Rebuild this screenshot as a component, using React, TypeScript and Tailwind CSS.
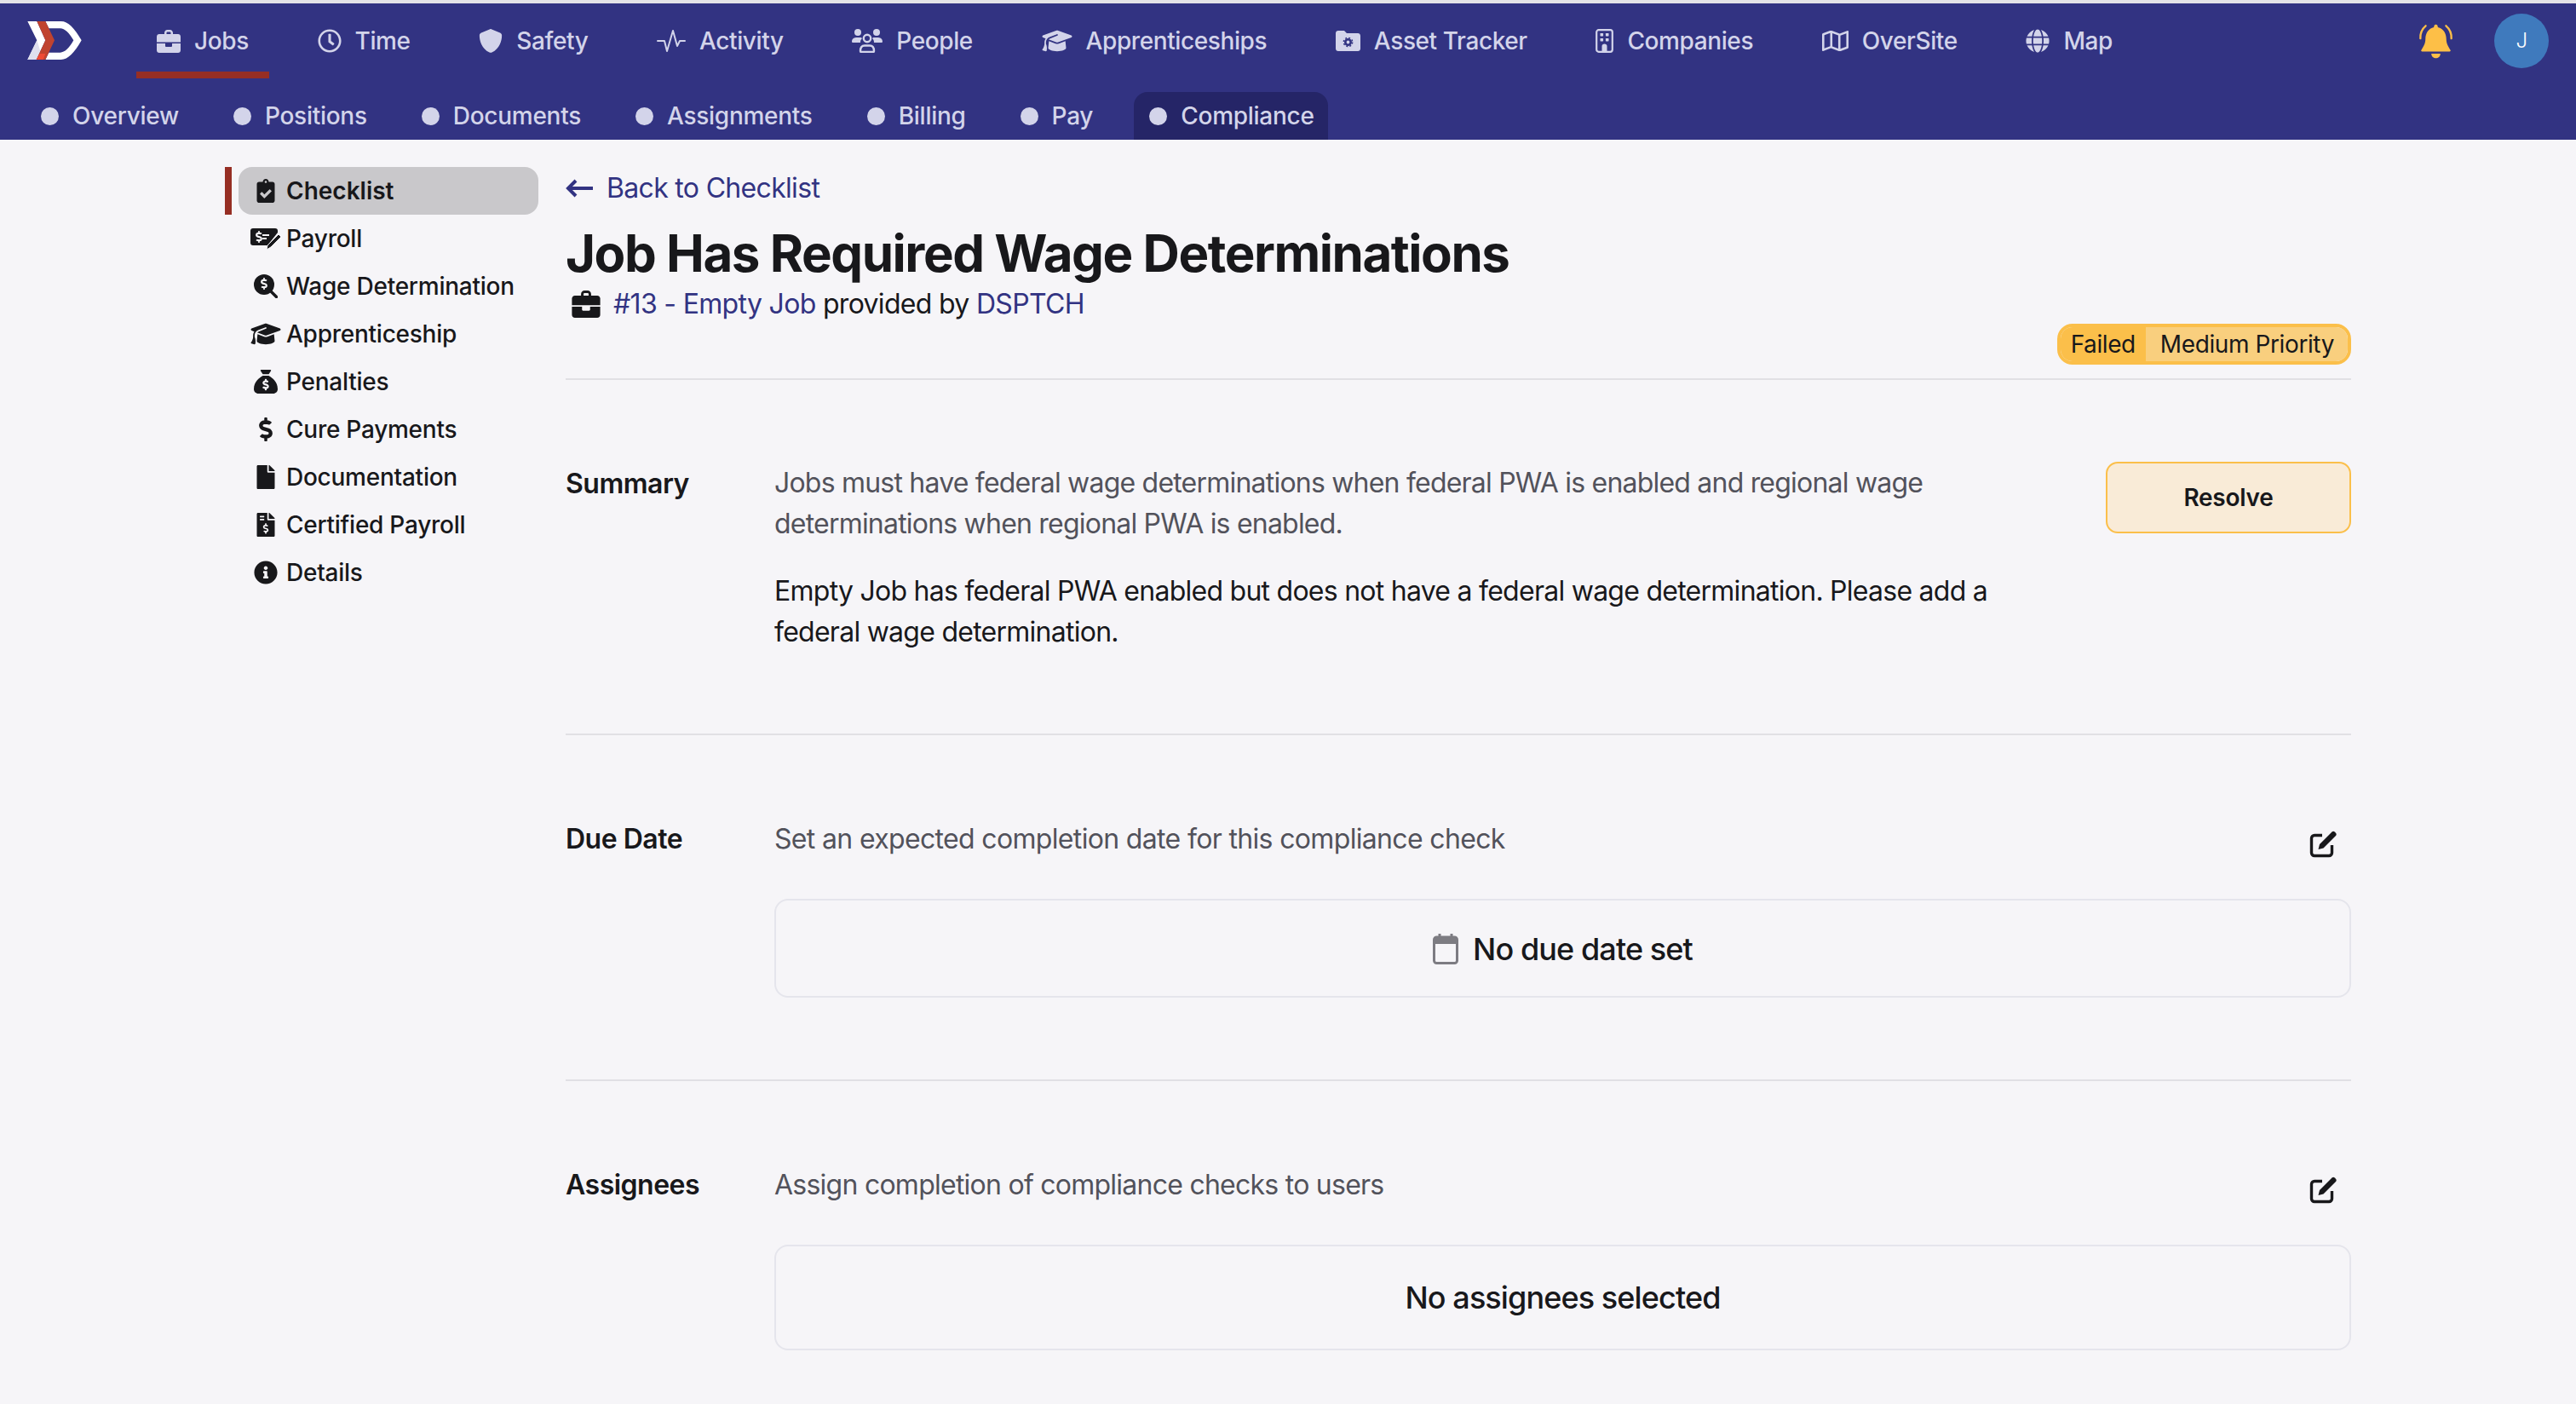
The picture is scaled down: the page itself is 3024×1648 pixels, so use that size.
import type { ReactNode } from "react"
import {
  FaRegClock,
  FaRegMap,
  FaGlobe,
  FaClipboardCheck,
  FaDollarSign,
  FaFile,
  FaFileInvoiceDollar,
  FaInfoCircle,
} from "react-icons/fa"
import { FaShield, FaSackDollar, FaGraduationCap } from "react-icons/fa6"

function Logo() {
  return (
    <svg viewBox="97 76 190 135" className="w-[64px] h-[45px] shrink-0">
      <path d="M160 76H215C240 76 262 100 287 143C262 187 240 211 215 211H160L172 186H212C228 186 244 170 259 143C244 117 228 101 212 101H172Z" fill="#ffffff" />
      <path d="M97 76H130L160 143L128 211H97L130 143Z" fill="#ffffff" />
      <path d="M130 143L97 211H128L142 180Z" fill="#dfdfee" />
      <path d="M130 76H160L192 143L160 211H128L160 143Z" fill="#c0432f" />
      <path d="M140 190L160 190L152 211H128Z" fill="#ef4a35" />
    </svg>
  )
}

function BriefcaseIcon({ className }: { className: string }) {
  return (
    <svg viewBox="0 0 28 27" className={className} fill="currentColor">
      <path d="M9 5V3.5C9 1.6 10.6 0 12.5 0H15.5C17.4 0 19 1.6 19 3.5V5H16.5V3.5C16.5 3 16 2.5 15.5 2.5H12.5C12 2.5 11.5 3 11.5 3.5V5Z" />
      <path d="M3 5H25C26.7 5 28 6.3 28 8V14.5H0V8C0 6.3 1.3 5 3 5Z" />
      <path d="M0 16H10V19C10 19.5 10.5 20 11 20H17C17.5 20 18 19.5 18 19V16H28V24C28 25.7 26.7 27 25 27H3C1.3 27 0 25.7 0 24Z" />
    </svg>
  )
}

function PulseIcon() {
  return (
    <svg viewBox="0 0 34 28" className="w-[34px] h-[28px]" fill="none" stroke="currentColor" strokeWidth="2" strokeLinejoin="round" strokeLinecap="round">
      <path d="M1 14H9L12 26L19 2L24 20L27 14H33" />
    </svg>
  )
}

function PeopleIcon() {
  return (
    <svg viewBox="0 0 36 28" className="w-[36px] h-[28px]" fill="currentColor">
      <circle cx="7" cy="4" r="4" />
      <circle cx="29" cy="4" r="4" />
      <path d="M0 15C0 11 3 10 6 10H10C11 10 11.5 10.5 12 11C10.5 12.5 10 14 10 16H1.5C.5 16 0 15.5 0 15Z" />
      <path d="M36 15C36 11 33 10 30 10H26C25 10 24.5 10.5 24 11C25.5 12.5 26 14 26 16H34.5C35.5 16 36 15.5 36 15Z" />
      <circle cx="18" cy="11" r="4.2" fill="none" stroke="currentColor" strokeWidth="2.4" />
      <path d="M10 26C10 22 12 19.5 15 19.5H21C24 19.5 26 22 26 26C26 26.6 25.6 27 25 27H11C10.4 27 10 26.6 10 26Z" fill="none" stroke="currentColor" strokeWidth="2.4" />
    </svg>
  )
}

function FolderGearIcon() {
  return (
    <svg viewBox="0 0 29 24" className="w-[29px] h-[24px]">
      <path d="M3 0H10L13 3H26C27.7 3 29 4.3 29 6V21C29 22.7 27.7 24 26 24H3C1.3 24 0 22.7 0 21V3C0 1.3 1.3 0 3 0Z" fill="currentColor" />
      <circle cx="14.5" cy="13.5" r="3.2" fill="none" stroke="#323382" strokeWidth="2.6" />
      <circle cx="14.5" cy="13.5" r="5.2" fill="none" stroke="#323382" strokeWidth="1.4" strokeDasharray="2 2.1" />
    </svg>
  )
}

function BuildingIcon() {
  return (
    <svg viewBox="0 0 21 28" className="w-[21px] h-[28px]" fill="currentColor">
      <rect x="1.2" y="1.2" width="18.6" height="25.6" rx="2.5" fill="none" stroke="currentColor" strokeWidth="2.2" />
      <rect x="5.5" y="5" width="3.6" height="3.4" rx=".6" />
      <rect x="11.9" y="5" width="3.6" height="3.4" rx=".6" />
      <rect x="5.5" y="11" width="3.6" height="3.4" rx=".6" />
      <rect x="11.9" y="11" width="3.6" height="3.4" rx=".6" />
      <path d="M7.5 27V20C7.5 18.6 8.8 17.5 10.5 17.5C12.2 17.5 13.5 18.6 13.5 20V27Z" />
    </svg>
  )
}

function BellIcon() {
  return (
    <svg viewBox="58 52 124 124" className="w-[41px] h-[41px]" fill="#fdbf47">
      <path d="M120 54C125 54 127 58 127 64C146 69 157 84 157 106C157 124 165 134 172 146C173 149 171 150 169 150H71C69 150 67 149 68 146C75 134 83 124 83 106C83 84 94 69 113 64C113 58 115 54 120 54Z" />
      <path d="M104 158H136C136 168 128 174 120 174C112 174 104 168 104 158Z" />
      <path d="M84 59C71 70 64 85 65 104" fill="none" stroke="#fdbf47" strokeWidth="7" strokeLinecap="round" />
      <path d="M156 59C169 70 176 85 175 104" fill="none" stroke="#fdbf47" strokeWidth="7" strokeLinecap="round" />
    </svg>
  )
}

function PayrollIcon() {
  return (
    <span className="relative w-[36px] h-[25px] shrink-0">
      <svg viewBox="0 0 36 25" className="w-[36px] h-[25px]">
        <path d="M3 0H29C31 0 32 1 32 3V5L20 20H3C1 20 0 19 0 17V3C0 1 1 0 3 0Z" fill="#18181b" />
        <path d="M14 8H22M14 12H19" stroke="#f6f5f8" strokeWidth="2" />
        <path d="M33 7L36 10L24 22L19 25L20 20Z" fill="#18181b" stroke="#f6f5f8" strokeWidth="1" />
      </svg>
      <FaDollarSign className="absolute left-[3px] top-[3px] text-[14px] text-[#f6f5f8]" />
    </span>
  )
}

function WageIcon() {
  return (
    <span className="relative w-[28px] h-[28px] shrink-0">
      <svg viewBox="0 0 28 28" className="w-[28px] h-[28px]">
        <circle cx="12" cy="12" r="12" fill="#18181b" />
        <path d="M19 19L26.5 26.5" stroke="#18181b" strokeWidth="3.4" strokeLinecap="round" />
      </svg>
      <FaDollarSign className="absolute left-[5px] top-[4px] text-[14px] text-[#f6f5f8]" />
    </span>
  )
}

function EditIcon() {
  return (
    <svg viewBox="0 0 32 32" className="mt-[16px] w-[32px] h-[32px] shrink-0" fill="none">
      <path d="M15 5.5H6a3.5 3.5 0 0 0-3.5 3.5V26a3.5 3.5 0 0 0 3.5 3.5H23a3.5 3.5 0 0 0 3.5-3.5V17" stroke="#18181b" strokeWidth="3.4" />
      <path d="M26.5 1.5C27.5 .6 28.8 .6 29.8 1.5L31 2.7C31.9 3.7 31.9 5 31 6L16.5 20.5L10.5 22L12 16Z" fill="#18181b" />
    </svg>
  )
}

function CalendarIcon() {
  return (
    <svg viewBox="0 0 30 36" className="w-[30px] h-[36px] shrink-0">
      <path d="M8 0V6M22 0V6" stroke="#7d7c82" strokeWidth="3" />
      <rect x="1.5" y="4" width="27" height="30.5" rx="3" fill="none" stroke="#7d7c82" strokeWidth="3" />
      <path d="M1.5 7C1.5 5 3 4 4.5 4H25.5C27 4 28.5 5 28.5 7V12H1.5Z" fill="#7d7c82" />
    </svg>
  )
}

function ArrowLeft() {
  return (
    <svg viewBox="0 0 32 22" className="w-[32px] h-[22px] shrink-0" fill="none" stroke="#323382" strokeWidth="4">
      <path d="M32 11H3" />
      <path d="M12 2L3 11L12 20" />
    </svg>
  )
}

const mainNav: { label: string; icon: ReactNode }[] = [
  { label: "Jobs", icon: <BriefcaseIcon className="w-[28px] h-[27px]" /> },
  { label: "Time", icon: <FaRegClock className="text-[28px]" /> },
  { label: "Safety", icon: <FaShield className="text-[28px]" /> },
  { label: "Activity", icon: <PulseIcon /> },
  { label: "People", icon: <PeopleIcon /> },
  { label: "Apprenticeships", icon: <FaGraduationCap className="text-[36px] h-[28px]" /> },
  { label: "Asset Tracker", icon: <FolderGearIcon /> },
  { label: "Companies", icon: <BuildingIcon /> },
  { label: "OverSite", icon: <FaRegMap className="text-[31px] h-[28px]" /> },
  { label: "Map", icon: <FaGlobe className="text-[28px]" /> },
]

const subNav = ["Overview", "Positions", "Documents", "Assignments", "Billing", "Pay", "Compliance"]

const sideNav: { label: string; icon: ReactNode }[] = [
  { label: "Checklist", icon: <FaClipboardCheck className="text-[28px]" /> },
  { label: "Payroll", icon: <PayrollIcon /> },
  { label: "Wage Determination", icon: <WageIcon /> },
  { label: "Apprenticeship", icon: <FaGraduationCap className="text-[36px] h-[28px]" /> },
  { label: "Penalties", icon: <FaSackDollar className="text-[28px]" /> },
  { label: "Cure Payments", icon: <FaDollarSign className="text-[28px]" /> },
  { label: "Documentation", icon: <FaFile className="text-[28px]" /> },
  { label: "Certified Payroll", icon: <FaFileInvoiceDollar className="text-[28px]" /> },
  { label: "Details", icon: <FaInfoCircle className="text-[28px]" /> },
]

export default function App() {
  return (
    <div className="h-[1648px] overflow-hidden bg-[#f6f5f8] font-['Inter',sans-serif] text-[#18181b]">
      <div className="h-[4px] bg-[#e4e3e8]" />

      {/* Top nav */}
      <header className="h-[160px] bg-[#323382] text-[#d3d4ea] text-[28px] font-medium">
        <div className="h-[88px] flex pl-[32px] pr-[32px] tracking-[-0.4px]">
          <div className="w-[128px] shrink-0 pt-[21px]">
            <Logo />
          </div>
          <nav className="flex gap-[32.7px]">
            {mainNav.map((item) => (
              <div
                key={item.label}
                className={
                  item.label === "Jobs"
                    ? "h-[88px] pt-[8px] px-[24px] flex items-center gap-[16px] border-b-8 border-[#962e24]"
                    : "h-[88px] pt-[8px] px-[24px] flex items-center gap-[16px] border-b-8 border-transparent"
                }
              >
                {item.icon}
                <span>{item.label}</span>
              </div>
            ))}
          </nav>
          <div className="ml-auto flex gap-[48px] pt-[12px]">
            <div className="pt-[12px]">
              <BellIcon />
            </div>
            <div className="w-[64px] h-[64px] rounded-full bg-[#3f7abd] text-white text-[24px] font-light flex items-center justify-center">
              J
            </div>
          </div>
        </div>
        <div className="h-[72px] flex items-end pl-[32px] gap-[32px] tracking-[-0.27px]">
          {subNav.map((label) => (
            <div
              key={label}
              className={
                label === "Compliance"
                  ? "h-[56px] pl-[18px] pr-[16px] flex items-center gap-[16px] rounded-t-[16px] bg-[#252567]"
                  : "h-[56px] px-[16px] flex items-center gap-[16px]"
              }
            >
              <span className="w-[21px] h-[21px] rounded-full bg-[#d3d4ea]" />
              <span>{label}</span>
            </div>
          ))}
        </div>
      </header>

      <div className="flex pl-[264px] pr-[264px]">
        {/* Sidebar */}
        <aside className="w-[368px] shrink-0 pt-[32px] text-[28px] font-medium">
          {sideNav.map((item) => (
            <div key={item.label} className="flex h-[56px] gap-[8px]">
              <span className={item.label === "Checklist" ? "w-[8px] bg-[#962e24]" : "w-[8px]"} />
              <div
                className={
                  item.label === "Checklist"
                    ? "flex-1 flex items-center gap-[6px] pl-[14px] rounded-[16px] bg-[#c9c8cb] font-semibold"
                    : "flex-1 flex items-center gap-[6px] pl-[14px] tracking-[-0.25px]"
                }
              >
                <span className="w-[36px] flex justify-center">{item.icon}</span>
                <span>{item.label}</span>
              </div>
            </div>
          ))}
        </aside>

        {/* Main content */}
        <main className="ml-[32px] flex-1 pt-[36px]">
          <div className="border-b-2 border-[#e1e0e4] pb-[16px]">
            <div className="h-[40px] pt-[2px] flex items-center gap-[16px] text-[32px] tracking-[-0.68px] text-[#323382]">
              <ArrowLeft />
              <span>Back to Checklist</span>
            </div>
            <h1 className="mt-[21px] text-[60px] leading-[72px] font-bold tracking-[-1.45px]">Job Has Required Wage Determinations</h1>
            <div className="mt-[4px] h-[40px] flex items-center text-[32px] tracking-[-0.68px] pl-[7px] gap-[15px]">
              <BriefcaseIcon className="w-[34px] h-[32px]" />
              <span>
                <span className="text-[#323382]">#13 - Empty Job</span> provided by <span className="text-[#323382]">DSPTCH</span>
              </span>
            </div>
            <div className="mt-[3px] flex justify-end">
              <div className="h-[48px] flex border-4 border-[#fbbf4a] rounded-[18px] text-[28px] tracking-[-0.4px] leading-none overflow-hidden">
                <span className="pl-[12px] pr-[12px] bg-[#fbbf4a] flex items-center">Failed</span>
                <span className="pl-[17px] pr-[16px] bg-[#f9cf7e] flex items-center rounded-r-[12px]">Medium Priority</span>
              </div>
            </div>
          </div>

          <section className="flex pt-[96px] pb-[95px] border-b-2 border-[#e1e0e4]">
            <h2 className="w-[245px] shrink-0 mt-[2px] text-[32px] leading-[48px] font-semibold tracking-[-0.5px]">Summary</h2>
            <div className="w-[1450px] mt-[1px] text-[32px] tracking-[-0.74px] leading-[48px]">
              <p className="text-[#52525b] tracking-[-0.79px]">Jobs must have federal wage determinations when federal PWA is enabled and regional wage determinations when regional PWA is enabled.</p>
              <p className="mt-[31px]">Empty Job has federal PWA enabled but does not have a federal wage determination. Please add a federal wage determination.</p>
            </div>
            <button className="ml-auto w-[288px] h-[84px] rounded-[14px] border-2 border-[#fbbf4a] bg-[#f9ebd7] text-[28px] tracking-[-0.25px] font-semibold">Resolve</button>
          </section>

          <section className="flex py-[96px] border-b-2 border-[#e1e0e4]">
            <h2 className="w-[245px] shrink-0 mt-[2px] text-[32px] leading-[48px] font-semibold tracking-[-0.5px]">Due Date</h2>
            <div className="flex-1">
              <div className="flex justify-between items-start pr-[17px]">
                <p className="mt-[2px] text-[32px] tracking-[-0.66px] leading-[48px] text-[#52525b]">Set an expected completion date for this compliance check</p>
                <EditIcon />
              </div>
              <div className="mt-[46px] h-[116px] pt-[1px] rounded-[16px] border-2 border-[#e5e5ec] flex items-center justify-center gap-[17px] text-[36px] tracking-[-0.9px] font-medium">
                <CalendarIcon />
                <span>No due date set</span>
              </div>
            </div>
          </section>

          <section className="flex pt-[96px]">
            <h2 className="w-[245px] shrink-0 mt-[2px] text-[32px] leading-[48px] font-semibold tracking-[-0.5px]">Assignees</h2>
            <div className="flex-1">
              <div className="flex justify-between items-start pr-[17px]">
                <p className="mt-[2px] text-[32px] tracking-[-0.75px] leading-[48px] text-[#52525b]">Assign completion of compliance checks to users</p>
                <EditIcon />
              </div>
              <div className="mt-[46px] h-[124px] rounded-[16px] border-2 border-[#e5e5ec] flex items-center justify-center text-[36px] tracking-[-0.9px] font-medium">
                No assignees selected
              </div>
            </div>
          </section>
        </main>
      </div>
    </div>
  )
}
